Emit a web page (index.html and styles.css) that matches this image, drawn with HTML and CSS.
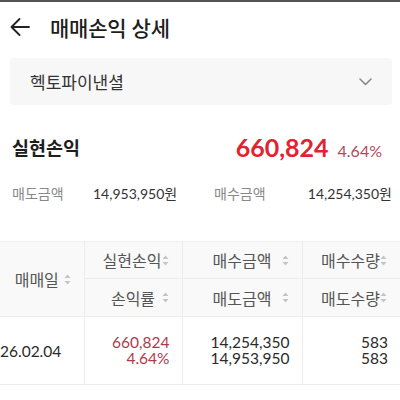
FILE: index.html
```html
<!DOCTYPE html>
<html lang="ko">
<head>
<meta charset="utf-8">
<link rel="stylesheet" href="styles.css">
</head>
<body>
<div class="topbar"></div>
<header class="header">
  <svg class="back" width="22" height="22" viewBox="0 0 22 22"><path d="M20 11H2.5M10.5 3L2.5 11l8 8" fill="none" stroke="#222" stroke-width="1.8" stroke-linecap="round" stroke-linejoin="round"/></svg>
  <h1 class="title">매매손익 상세</h1>
</header>
<div class="select">
  <span class="select-text">헥토파이낸셜</span>
  <svg width="13" height="8" viewBox="0 0 13 8"><path d="M1 1l5.5 5.5L12 1" fill="none" stroke="#8a8a8a" stroke-width="1.6" stroke-linecap="round" stroke-linejoin="round"/></svg>
</div>
<section class="summary">
  <span class="summary-label">실현손익</span>
  <span class="summary-value"><span class="profit">660,824</span><span class="rate">4.64%</span></span>
</section>
<section class="amounts">
  <div class="amount amount-left"><span class="amount-label">매도금액</span><span class="amount-value">14,953,950원</span></div>
  <div class="amount amount-right"><span class="amount-label">매수금액</span><span class="amount-value">14,254,350원</span></div>
</section>
<div class="table-wrap">
  <table class="grid">
    <colgroup><col class="c1"><col class="c2"><col class="c3"><col class="c4"></colgroup>
    <thead>
      <tr class="h1">
        <th rowspan="2"><div class="th"><span></span><span>매매일</span><i class="sort"><svg width="7" height="11" viewBox="0 0 7 11"><path d="M3.5 0.5L6.5 4H0.5z M3.5 10.5L6.5 7H0.5z" fill="#c4c4c4"/></svg></i></div></th>
        <th><div class="th"><span></span><span>실현손익</span><i class="sort"><svg width="7" height="11" viewBox="0 0 7 11"><path d="M3.5 0.5L6.5 4H0.5z M3.5 10.5L6.5 7H0.5z" fill="#c4c4c4"/></svg></i></div></th>
        <th><div class="th"><span></span><span>매수금액</span><i class="sort"><svg width="7" height="11" viewBox="0 0 7 11"><path d="M3.5 0.5L6.5 4H0.5z M3.5 10.5L6.5 7H0.5z" fill="#c4c4c4"/></svg></i></div></th>
        <th><div class="th"><span></span><span>매수수량</span><i class="sort"><svg width="7" height="11" viewBox="0 0 7 11"><path d="M3.5 0.5L6.5 4H0.5z M3.5 10.5L6.5 7H0.5z" fill="#c4c4c4"/></svg></i></div></th>
      </tr>
      <tr class="h2">
        <th><div class="th"><span></span><span>손익률</span><i class="sort"><svg width="7" height="11" viewBox="0 0 7 11"><path d="M3.5 0.5L6.5 4H0.5z M3.5 10.5L6.5 7H0.5z" fill="#c4c4c4"/></svg></i></div></th>
        <th><div class="th"><span></span><span>매도금액</span><i class="sort"><svg width="7" height="11" viewBox="0 0 7 11"><path d="M3.5 0.5L6.5 4H0.5z M3.5 10.5L6.5 7H0.5z" fill="#c4c4c4"/></svg></i></div></th>
        <th><div class="th"><span></span><span>매도수량</span><i class="sort"><svg width="7" height="11" viewBox="0 0 7 11"><path d="M3.5 0.5L6.5 4H0.5z M3.5 10.5L6.5 7H0.5z" fill="#c4c4c4"/></svg></i></div></th>
      </tr>
    </thead>
    <tbody>
      <tr class="row">
        <td class="date">26.02.04</td>
        <td class="num red"><div class="line">660,824</div><div class="line">4.64%</div></td>
        <td class="num"><div class="line">14,254,350</div><div class="line">14,953,950</div></td>
        <td class="num"><div class="line">583</div><div class="line">583</div></td>
      </tr>
    </tbody>
  </table>
</div>
</body>
</html>
```

FILE: styles.css
```css
* { box-sizing: border-box; }
html, body { margin: 0; padding: 0; background: #fff; }
body {
  font-family: "Lato", "Noto Sans CJK KR", sans-serif;
  color: #222;
  width: 400px;
  overflow: hidden;
}
.topbar { height: 2px; background: #555; }
.header {
  height: 50px;
  display: flex;
  align-items: center;
  padding-left: 9px;
}
.back { display: block; }
.title {
  margin: 0 0 0 19px;
  font-size: 21px;
  font-weight: 500;
  color: #1e1e1e;
  letter-spacing: -0.2px;
}
.select {
  margin: 6px 8px 0 10px;
  height: 47px;
  background: #f7f7f7;
  border-radius: 4px;
  display: flex;
  align-items: center;
  justify-content: space-between;
  padding: 0 20px 0 20px;
}
.select-text { font-size: 17px; color: #333; }
.select svg { display: block; }
.summary {
  margin-top: 22px;
  height: 40px;
  padding: 0 18px 0 12px;
  display: flex;
  align-items: center;
  justify-content: space-between;
}
.summary-label { font-size: 18.5px; font-weight: 600; color: #1e1e1e; }
.summary-value { display: flex; align-items: baseline; gap: 9px; }
.profit { font-size: 25px; font-weight: 700; color: #e2232f; }
.rate { font-size: 16px; color: #b3485a; }
.amounts {
  margin-top: 14px;
  height: 24px;
  padding: 0 8px 0 12px;
  display: flex;
  align-items: center;
}
.amount { display: flex; align-items: center; }
.amount-left { width: 202px; }
.amount-left .amount-label { width: 81px; }
.amount-right { flex: 1; justify-content: space-between; }
.amount-label { font-size: 14px; color: #888; }
.amount-value { font-size: 14px; color: #333; }
.table-wrap {
  margin-top: 36px;
  overflow: hidden;
  width: 400px;
}
.grid {
  margin-left: -10px;
  width: 410px;
  border-collapse: collapse;
  table-layout: fixed;
}
.c1 { width: 94px; }
.c2 { width: 98px; }
.c3 { width: 120px; }
.c4 { width: 98px; }
.grid th {
  background: #f9f9f9;
  font-weight: 400;
  font-size: 16px;
  color: #555;
  padding: 0 11px 0 11px;
  border: 1px solid #ececec;
  white-space: nowrap;
}
.grid tr > *:first-child { border-left: none; }
.grid tr > *:last-child { border-right: none; }
.grid thead tr:first-child th { border-top: 1px solid #f0f0f0; }
.h1 th { height: 37px; }
.h2 th { height: 38px; }
.th {
  display: grid;
  grid-template-columns: 1fr auto 1fr;
  align-items: center;
}
.sort { display: flex; justify-content: flex-end; padding-right: 2px; }
.sort svg { display: block; }
.row td {
  height: 68px;
  border: 1px solid #ececec;
  font-size: 15.5px;
  color: #2a2a2a;
  vertical-align: middle;
}
.line { line-height: 16px; }
.row td.date { padding-left: 10px; padding-top: 2px; }
.row td.num { text-align: right; padding-right: 12px; padding-top: 0; }
.row td.red { color: #b03a4a; }
```
